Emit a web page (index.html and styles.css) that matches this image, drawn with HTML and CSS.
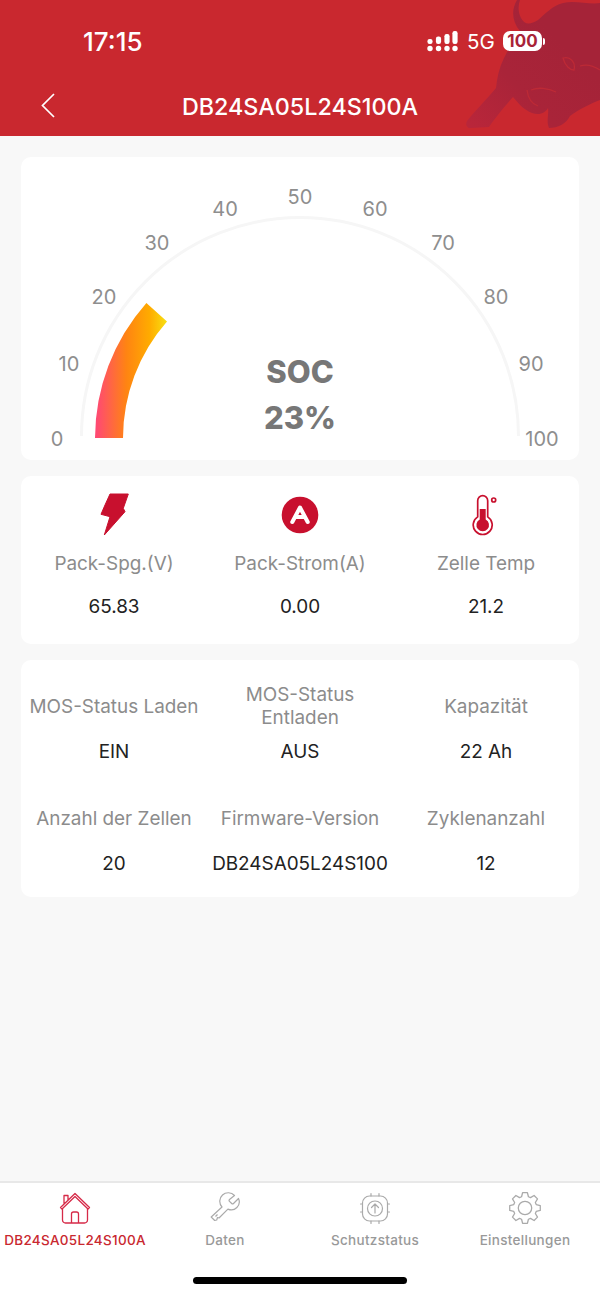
FILE: index.html
```html
<!DOCTYPE html>
<html>
<head>
  <link rel="stylesheet" href="styles.css">
</head>
<body>
  <div class="app">
    <header class="header">
      <!-- bull watermark -->
      <svg class="bull" viewBox="460 0 140 136" width="140" height="136">
        <defs>
          <linearGradient id="bullFill" gradientUnits="userSpaceOnUse" x1="470" y1="125" x2="560" y2="40">
            <stop offset="0" stop-color="#b9263a"/>
            <stop offset=".5" stop-color="#a92439"/>
            <stop offset="1" stop-color="#a52338"/>
          </linearGradient>
        </defs>
        <path fill="url(#bullFill)" d="M517 0C511 10 512 22 520 31C514 38 508 50 504 58C499 68 497 78 496 88C486 100 474 112 467 121C465 125 467 129 471 128L489 127C495 118 505 106 513 97C518 103 524 110 532 113C540 116 546 112 548 108C549 114 546 122 549 128C558 128 566 124 570 116C578 110 590 104 600 100V3C590 5 575 0 563 3C552 6 545 14 538 20C530 25 525 25 521 18C518 12 518 6 520 0Z"/>
        <path fill="none" stroke="#bd2a36" stroke-width="1.300" d="M531 90C538 87 548 88 556 92M527 90C528 98 532 104 538 106M563 58C570 56 576 62 574 70C570 70 565 66 563 58ZM580 66C586 64 594 66 600 70"/>
      </svg>
      <div class="status-bar">
        <span class="time">17:15</span>
        <div class="status-icons">
          <svg class="signal" width="31" height="21" viewBox="0 0 31 21" fill="#fff">
            <circle cx="3" cy="17.500" r="2.700"/><circle cx="11.500" cy="17.500" r="2.700"/><circle cx="20" cy="17.500" r="2.700"/><circle cx="28" cy="17.500" r="2.700"/>
            <rect x=".4" y="8" width="5.200" height="5" rx="2.200"/><rect x="8.900" y="5.500" width="5.200" height="7.500" rx="2.200"/><rect x="17.400" y="3" width="5.200" height="10" rx="2.200"/><rect x="25.400" y="0" width="5.200" height="13" rx="2.200"/>
          </svg>
          <span class="net">5G</span>
          <div class="battery"><span class="battery-level">100</span><i class="battery-tip"></i></div>
        </div>
      </div>
      <div class="nav">
        <svg class="back" width="14" height="25" viewBox="0 0 14 25" fill="none" stroke="#fff" stroke-width="1.700">
          <path d="M13 1 1.500 12.500 13 24"/>
        </svg>
        <h1 class="title">DB24SA05L24S100A</h1>
      </div>
    </header>

    <main class="content">
      <section class="card gauge-card">
        <!-- viewBox uses page coordinates, center of the dial is 300,438 -->
        <svg class="gauge" width="558" height="303" viewBox="21 157 558 303">
          <defs>
            <linearGradient id="socFill" gradientUnits="userSpaceOnUse" x1="97" y1="0" x2="167" y2="0">
              <stop offset="0" stop-color="#ff4a72"/>
              <stop offset=".42" stop-color="#ff8412"/>
              <stop offset=".75" stop-color="#ffab00"/>
              <stop offset="1" stop-color="#f8e012"/>
            </linearGradient>
          </defs>
          <path class="gauge-track" d="M81.500 436A218.500 218.500 0 0 1 518.500 436"/>
          <path fill="url(#socFill)" d="M95 438A205 205 0 0 1 146.400 303L167 321.500A177 177 0 0 0 123 438Z"/>
          <g class="gauge-ticks">
            <text x="57" y="446">0</text>
            <text x="69" y="371">10</text>
            <text x="104" y="304">20</text>
            <text x="157" y="250">30</text>
            <text x="225" y="216">40</text>
            <text x="300" y="204">50</text>
            <text x="375" y="216">60</text>
            <text x="443" y="250">70</text>
            <text x="496" y="304">80</text>
            <text x="531" y="371">90</text>
            <text x="542" y="446">100</text>
          </g>
          <text class="gauge-label" x="300" y="383">SOC</text>
          <text class="gauge-label" x="300" y="429">23%</text>
        </svg>
      </section>

      <section class="card pack-card">
        <div class="cell">
          <svg class="pack-icon" width="44" height="44" viewBox="0 0 44 44" fill="#c8102e">
            <path d="M18 2H36.300L31.300 16.300 33 19.700 12.300 43 18 24.700 9 22.300 13 13Z" stroke="#c8102e" stroke-linejoin="round"/>
          </svg>
          <div class="label">Pack-Spg.(V)</div>
          <div class="value">65.83</div>
        </div>
        <div class="cell">
          <svg class="pack-icon" width="44" height="44" viewBox="0 0 44 44">
            <circle cx="22" cy="23" r="18.300" fill="#c8102e"/>
            <path d="M14.300 30 22 15.500 29.700 30M17.500 25H26.500" fill="none" stroke="#fff" stroke-width="4" stroke-linecap="round" stroke-linejoin="round"/>
          </svg>
          <div class="label">Pack-Strom(A)</div>
          <div class="value">0.00</div>
        </div>
        <div class="cell">
          <svg class="pack-icon" width="44" height="44" viewBox="0 0 44 44" fill="none" stroke="#c8102e" stroke-width="1.700">
            <path d="M13.700 24.900V8.700a5 5 0 0 1 10 0V24.900A9.500 9.500 0 1 1 13.700 24.900Z"/>
            <circle cx="29.700" cy="8" r="2"/>
            <path d="M15.700 17H21.700V27.500A6.300 6.300 0 1 1 15.700 27.500Z" fill="#c8102e" stroke="none"/>
          </svg>
          <div class="label">Zelle Temp</div>
          <div class="value">21.2</div>
        </div>
      </section>

      <section class="card info-card">
        <div class="cell">
          <div class="label">MOS-Status Laden</div>
          <div class="value">EIN</div>
        </div>
        <div class="cell">
          <div class="label">MOS-Status Entladen</div>
          <div class="value">AUS</div>
        </div>
        <div class="cell">
          <div class="label">Kapazität</div>
          <div class="value">22 Ah</div>
        </div>
        <div class="cell">
          <div class="label">Anzahl der Zellen</div>
          <div class="value">20</div>
        </div>
        <div class="cell">
          <div class="label">Firmware-Version</div>
          <div class="value">DB24SA05L24S100</div>
        </div>
        <div class="cell">
          <div class="label">Zyklenanzahl</div>
          <div class="value">12</div>
        </div>
      </section>
    </main>

    <nav class="tabbar">
      <div class="tabs">
        <div class="tab active">
          <svg width="32" height="32" viewBox="0 0 32 32" fill="none" stroke="#d62a48" stroke-width="1.300" stroke-linejoin="round">
            <path d="M1.500 15.500 16 1.500 30.500 15.500 29 17 16 4.500 3 17ZM5 11.500V3.500H9V8"/>
            <path d="M3.500 16.500V28a3 3 0 0 0 3 3H25.500a3 3 0 0 0 3-3V16.500"/>
            <path d="M12.500 31V22a2 2 0 0 1 2-2H17.500a2 2 0 0 1 2 2V31"/>
          </svg>
          <span>DB24SA05L24S100A</span>
        </div>
        <div class="tab">
          <svg width="32" height="32" viewBox="0 0 32 32" fill="none" stroke="#aaa" stroke-width="1.200" stroke-linejoin="round">
            <path d="M20.500 7.500a1.300 1.300 0 0 0 0 1.800L22.700 11.500a1.300 1.300 0 0 0 1.800 0L29.500 6.500a8 8 0 0 1-10.600 10.600L10 26l-1.500-.5-.8 2.500-2 .5-3.500-3.500L13 15a8 8 0 0 1 12.500-11.500Z"/>
            <path d="M6.500 24.500 8.500 22.500"/>
          </svg>
          <span>Daten</span>
        </div>
        <div class="tab">
          <svg width="32" height="32" viewBox="0 0 32 32" fill="none" stroke="#aaa" stroke-width="1.200" stroke-linecap="round" stroke-linejoin="round">
            <rect x="3.500" y="4" width="25" height="25" rx="7"/>
            <path d="M12 4V1.500M20 4V1.500M12 29V31.500M20 29V31.500M3.500 12H1.500M3.500 20H1.500M28.500 12H30.500M28.500 20H30.500"/>
            <circle cx="16" cy="16.500" r="7.500"/>
            <path d="M16 21V12.500M12.500 15.500 16 12 19.500 15.500"/>
          </svg>
          <span>Schutzstatus</span>
        </div>
        <div class="tab">
          <svg width="32" height="32" viewBox="0 0 30 30" fill="none" stroke="#aaa" stroke-width="1.200" stroke-linejoin="round">
            <path d="M11.780 4.480 12.730.68H17.270L18.220 4.480 20.160 5.290 23.520 3.270 26.730 6.480 24.710 9.840 25.520 11.780 29.320 12.730V17.270L25.520 18.220 24.710 20.160 26.730 23.520 23.520 26.730 20.160 24.710 18.220 25.520 17.270 29.320H12.730L11.780 25.520 9.840 24.710 6.480 26.730 3.270 23.520 5.290 20.160 4.480 18.220.68 17.270V12.730L4.480 11.780 5.290 9.840 3.270 6.480 6.480 3.270 9.840 5.290Z"/>
            <circle cx="15" cy="15" r="6.300"/>
          </svg>
          <span>Einstellungen</span>
        </div>
      </div>
      <div class="home-bar"></div>
    </nav>
  </div>
</body>
</html>
```

FILE: styles.css
```css
* {
  box-sizing: border-box;
}

body {
  margin: 0;
  background: #f8f8f8;
  font-family: 'Inter', 'Liberation Sans', sans-serif;
}

.app {
  display: flex;
  flex-direction: column;
  height: 1298px;
  overflow: hidden;
}

/* header */
.header {
  position: relative;
  height: 136px;
  background: #c9282f;
  color: #fff;
  overflow: hidden;
}

.bull {
  position: absolute;
  top: 0;
  right: 0;
}

.status-bar {
  position: relative;
  display: flex;
  justify-content: space-between;
  align-items: center;
  height: 82px;
  padding: 0 55px 0 83px;
}

.time {
  font-size: 26px;
  font-weight: 500;
}

.status-icons {
  display: flex;
  align-items: center;
}

.signal {
  margin-right: 9px;
}

.net {
  width: 36px;
  font-size: 20.500px;
}

.battery {
  display: flex;
  align-items: center;
}

.battery-level {
  width: 39px;
  height: 20px;
  background: #fff;
  border-radius: 7px;
  color: #a82338;
  font-size: 17px;
  font-weight: 700;
  line-height: 20px;
  text-align: center;
}

.battery-tip {
  width: 2px;
  height: 7px;
  margin-left: 1px;
  background: #fff;
  border-radius: 0 2px 2px 0;
}

.nav {
  position: relative;
  display: flex;
  justify-content: center;
  align-items: center;
  height: 48px;
}

.back {
  position: absolute;
  top: 11px;
  left: 41px;
}

.title {
  margin: 0;
  font-size: 23.300px;
  font-weight: 500;
}

/* cards */
.content {
  flex: 1;
  display: flex;
  flex-direction: column;
  gap: 16px;
  padding: 21px 21px 0;
}

.card {
  background: #fff;
  border-radius: 10px;
}

.gauge {
  display: block;
}

.gauge-track {
  fill: none;
  stroke: #f6f6f6;
  stroke-width: 3;
}

.gauge-ticks text {
  fill: #8e8e8e;
  font-size: 20px;
  text-anchor: middle;
}

.gauge-label {
  fill: #777;
  font-size: 31px;
  font-weight: 800;
  text-anchor: middle;
}

.pack-card,
.info-card {
  display: grid;
  grid-template-columns: repeat(3, 1fr);
  text-align: center;
}

.pack-card {
  height: 168px;
  padding-top: 16px;
}

.pack-icon {
  display: block;
  margin: 0 auto 16px;
}

.pack-card .value {
  margin-top: 20px;
}

.info-card {
  grid-auto-rows: 112px;
  padding-top: 23px;
  height: 237px;
}

.info-card .cell {
  display: flex;
  flex-direction: column;
}

.info-card .label {
  display: flex;
  align-items: center;
  justify-content: center;
  height: 46px;
}

.info-card .value {
  margin-top: 11px;
}

.label {
  color: #8c8c8c;
  font-size: 18.900px;
  line-height: 23px;
}

.value {
  color: #222;
  font-size: 18.900px;
  line-height: 23px;
}

/* bottom tabs */
.tabbar {
  height: 117px;
  background: #fff;
  border-top: 2px solid #e8e8e8;
}

.tabs {
  display: grid;
  grid-template-columns: repeat(4, 1fr);
  padding-top: 9px;
}

.tab {
  display: flex;
  flex-direction: column;
  align-items: center;
  color: #999;
  font-size: 13.500px;
  font-weight: 500;
  letter-spacing: .3px;
}

.tab svg {
  margin-bottom: 8px;
}

.tab.active {
  color: #c9282f;
}

.home-bar {
  width: 214px;
  height: 7px;
  margin: 29px auto 0;
  background: #000;
  border-radius: 4px;
}
```
